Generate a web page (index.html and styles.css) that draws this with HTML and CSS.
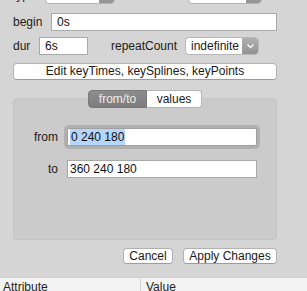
FILE: index.html
```html
<!DOCTYPE html>
<html>
<head>
<meta charset="utf-8">
<link rel="stylesheet" href="styles.css">
</head>
<body>
<div class="panel">
  <div class="row row-top">
    <span class="label label-type">type</span>
    <div class="popup popup-type"><span class="popup-text"></span><span class="popup-arrow"></span></div>
    <div class="popup popup-calc"><span class="popup-text"></span><span class="popup-arrow"></span></div>
  </div>
  <div class="row row-begin">
    <span class="label label-begin">begin</span>
    <div class="field field-begin">0s</div>
  </div>
  <div class="row row-dur">
    <span class="label label-dur">dur</span>
    <div class="field field-dur">6s</div>
    <span class="label label-repeat">repeatCount</span>
    <div class="popup popup-repeat"><span class="popup-text">indefinite</span><span class="popup-arrow"><svg width="9" height="6" viewBox="0 0 9 6"><path d="M1.5 1.5 L4.5 4.5 L7.5 1.5" fill="none" stroke="#fff" stroke-width="1.3"/></svg></span></div>
  </div>
  <div class="btn btn-wide">Edit keyTimes, keySplines, keyPoints</div>
  <div class="tabview">
    <div class="segment">
      <span class="seg seg-on">from/to</span><span class="seg seg-off">values</span>
    </div>
    <div class="box">
      <div class="frow frow-from">
        <span class="flabel">from</span>
        <div class="field field-wide field-focus"><span class="sel">0 240 180</span></div>
      </div>
      <div class="frow frow-to">
        <span class="flabel">to</span>
        <div class="field field-wide">360 240 180</div>
      </div>
    </div>
  </div>
  <div class="actions">
    <div class="btn btn-cancel">Cancel</div>
    <div class="btn btn-apply">Apply Changes</div>
  </div>
</div>
<div class="table-head">
  <div class="th th-attr">Attribute</div>
  <div class="th th-val">Value</div>
</div>
</body>
</html>
```
FILE: styles.css
```css
html, body {
  margin: 0;
  padding: 0;
  background: #d5d5d5;
  overflow: hidden;
}
body {
  width: 307px;
  height: 291px;
  font-family: "Liberation Sans", Arial, sans-serif;
  font-size: 12px;
  color: #1c1c1c;
}
.panel {
  padding: 0 30px 0 13px;
}
.row {
  display: flex;
  align-items: center;
  height: 18px;
}
.row-top {
  margin-top: -14px;
}
.label-type { width: 32px; }
.popup {
  display: flex;
  height: 18px;
  box-sizing: border-box;
  background: #fff;
  border: 1px solid #b3b3b3;
  border-radius: 4px;
  overflow: hidden;
}
.popup-text {
  flex: 1;
  padding-left: 5px;
  line-height: 16px;
}
.popup-arrow {
  width: 15px;
  display: flex;
  align-items: center;
  justify-content: center;
  background: linear-gradient(#b0b0b0, #939393);
}
.popup-type { width: 70px; }
.popup-calc { width: 74px; margin-left: 73px; }
.row-begin {
  margin-top: 9px;
}
.label-begin { width: 38px; }
.field {
  height: 18px;
  box-sizing: border-box;
  background: #fff;
  border: 1px solid #a9a9a9;
  padding-left: 5px;
  line-height: 16px;
  color: #111;
}
.field-begin { flex: 1; }
.row-dur {
  margin-top: 6px;
}
.label-dur { width: 26px; }
.field-dur { width: 49px; }
.label-repeat { margin-left: 23px; width: 74px; }
.popup-repeat { width: 74px; border-color: #b8b8b8; }
.popup-repeat .popup-arrow { width: 16px; }
.btn {
  box-sizing: border-box;
  height: 17px;
  background: #fff;
  border: 1px solid #b2b2b2;
  border-bottom-color: #9c9c9c;
  border-radius: 4px;
  text-align: center;
  line-height: 15px;
  color: #1a1a1a;
}
.btn-wide {
  margin-top: 8px;
}
.tabview {
  margin-top: 10px;
}
.segment {
  position: relative;
  z-index: 1;
  display: flex;
  justify-content: center;
}
.seg {
  height: 18px;
  box-sizing: border-box;
  line-height: 16px;
  text-align: center;
}
.seg-on {
  width: 59px;
  background: linear-gradient(#8d8d8d, #7c7c7c);
  color: #ececec;
  border: 1px solid #7a7a7a;
  border-radius: 4px 0 0 4px;
}
.seg-off {
  width: 55px;
  background: #fff;
  color: #1a1a1a;
  border: 1px solid #b5b5b5;
  border-left: none;
  border-radius: 0 4px 4px 0;
}
.box {
  margin-top: -10px;
  height: 142px;
  box-sizing: border-box;
  background: #cbcbcb;
  border: 1px solid #c4c4c4;
  border-radius: 4px;
  padding: 29px 19px 0 0;
}
.frow {
  display: flex;
  align-items: center;
  height: 18px;
}
.frow-to {
  margin-top: 14px;
}
.flabel {
  width: 44px;
  text-align: right;
  margin-right: 9px;
}
.field-wide {
  flex: 1;
  padding-left: 2px;
}
.field-focus {
  border-color: #a0a0a0;
  box-shadow: 0 0 0 3px #b0b0b0;
  border-radius: 2px;
}
.sel {
  background: #b5d5fb;
  padding: 1px;
}
.actions {
  display: flex;
  justify-content: flex-end;
  gap: 10px;
  margin-top: 8px;
}
.btn-cancel { width: 50px; height: 16px; line-height: 14px; }
.btn-apply { width: 94px; height: 16px; line-height: 14px; }
.table-head {
  margin-top: 13px;
  display: flex;
  height: 15px;
  background: #f3f3f3;
  border-top: 1px solid #cfcfcf;
}
.th {
  line-height: 18px;
  color: #222;
}
.th-attr {
  width: 137px;
  padding-left: 3px;
  border-right: 1px solid #d4d4d4;
}
.th-val {
  padding-left: 5px;
}
```
